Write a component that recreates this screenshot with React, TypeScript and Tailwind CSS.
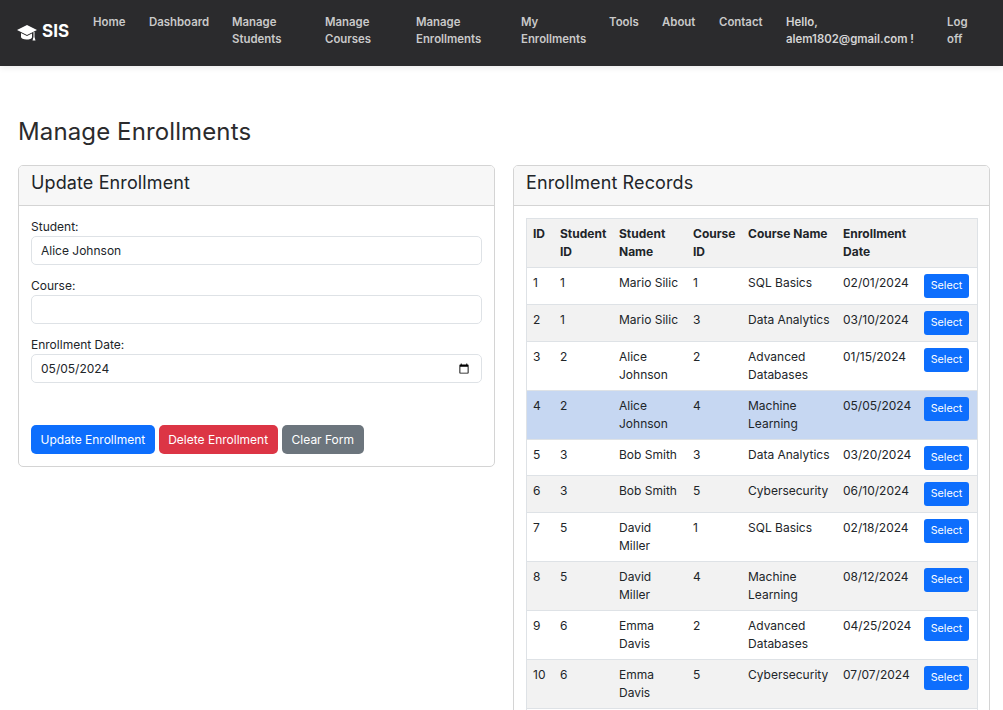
import React from "react";

const navItems = [
  { label: "Home", w: "w-[56px]" },
  { label: "Dashboard", w: "w-[83px]" },
  { label: "Manage Students", w: "w-[93px]" },
  { label: "Manage Courses", w: "w-[91px]" },
  { label: "Manage Enrollments", w: "w-[105px]" },
  { label: "My Enrollments", w: "w-[88px]" },
  { label: "Tools", w: "w-[53px]" },
  { label: "About", w: "w-[57px]" },
  { label: "Contact", w: "w-[67px]" },
];

const rows = [
  ["1", "1", "Mario Silic", "1", "SQL Basics", "02/01/2024"],
  ["2", "1", "Mario Silic", "3", "Data Analytics", "03/10/2024"],
  ["3", "2", "Alice Johnson", "2", "Advanced Databases", "01/15/2024"],
  ["4", "2", "Alice Johnson", "4", "Machine Learning", "05/05/2024"],
  ["5", "3", "Bob Smith", "3", "Data Analytics", "03/20/2024"],
  ["6", "3", "Bob Smith", "5", "Cybersecurity", "06/10/2024"],
  ["7", "5", "David Miller", "1", "SQL Basics", "02/18/2024"],
  ["8", "5", "David Miller", "4", "Machine Learning", "08/12/2024"],
  ["9", "6", "Emma Davis", "2", "Advanced Databases", "04/25/2024"],
  ["10", "6", "Emma Davis", "5", "Cybersecurity", "07/07/2024"],
];

const headers = ["ID", "Student ID", "Student Name", "Course ID", "Course Name", "Enrollment Date", ""];

const inputClass =
  "block w-full h-[29px] border border-[#dee2e6] rounded-[5px] px-[9px] text-[12px] leading-[18px] text-[#212529] bg-white outline-none [&::-webkit-datetime-edit-month-field]:p-0 [&::-webkit-datetime-edit-day-field]:p-0 [&::-webkit-datetime-edit-year-field]:p-0 [&::-webkit-datetime-edit-text]:p-0 [&::-webkit-datetime-edit]:p-0";

const Field = ({ label, value, type = "text", mb = "mb-[12px]" }: { label: string; value: string; type?: string; mb?: string }) => (
  <div className={mb}>
    <div className="h-[18px] text-[12px] leading-[18px] text-[#212529]">{label}</div>
    <input type={type} defaultValue={value} className={inputClass} />
  </div>
);

const App = () => {
  return (
    <div className="w-full h-[710px] overflow-hidden bg-white text-[#212529] font-['Inter',sans-serif]">
      <nav className="h-[66px] bg-[#2b2b2d] flex items-start pl-[17px] shadow-[0_2px_6px_rgba(0,0,0,0.08)]">
        <div className="flex items-center h-[20px] mt-[22px] mr-[12px] text-white font-bold text-[17px] w-[64px]">
          <svg viewBox="0 0 20 17" className="w-[20px] h-[17px] mr-[5px] shrink-0" fill="#fff">
            <path d="M10 1 20 6 10 11 0 6Z" />
            <path d="M4 9 10 12 15 9.500V13C15 15 12 15.500 9.500 15.500 6.500 15.500 4 14.500 4 13Z" />
            <path d="M16.500 8h1v5l1 3.500h-3l1-3.500Z" />
          </svg>
          <span>SIS</span>
        </div>
        {navItems.map((n) => (
          <div key={n.label} className={`${n.w} pt-[14px] text-[11.4px] leading-[17px] font-semibold text-[#c9c9c9]`}>
            <div className="pr-[8px]">{n.label}</div>
          </div>
        ))}
        <div className="w-[161px] pt-[14px] text-[11.4px] leading-[17px] font-semibold text-[#d4d4d4]">
          Hello,
          <br />
          alem1802@gmail.com !
        </div>
        <div className="pt-[14px] text-[11.4px] leading-[17px] font-semibold text-[#c9c9c9] w-[30px]">Log off</div>
      </nav>

      <main className="px-[18px] pt-[50px]">
        <h1 className="text-[24px] leading-[32px] font-normal tracking-[0.12px] text-[#2b2b2d] mb-[17px]">Manage Enrollments</h1>
        <div className="flex items-start gap-[18px] w-[972px]">
          <section className="w-[477px] border border-[#d4d4d4] rounded-[5px] overflow-hidden">
            <h2 className="h-[40px] bg-[#f7f7f7] border-b border-[#d4d4d4] px-[12px] text-[18px] leading-[34px] font-normal tracking-[0.12px]">Update Enrollment</h2>
            <div className="px-[12px] pt-[12px] pb-[12px]">
              <Field label="Student:" value="Alice Johnson" />
              <Field label="Course:" value="" />
              <Field label="Enrollment Date:" value="2024-05-05" type="date" mb="mb-[42px]" />
              <div className="flex gap-[4px]">
                <button className="h-[29px] px-[9.5px] rounded-[5px] bg-[#0d6efd] text-white text-[12px]">Update Enrollment</button>
                <button className="h-[29px] px-[9.5px] rounded-[5px] bg-[#dc3545] text-white text-[12px]">Delete Enrollment</button>
                <button className="h-[29px] px-[10px] rounded-[5px] bg-[#6c757d] text-white text-[12px]">Clear Form</button>
              </div>
            </div>
          </section>

          <section className="w-[477px] border border-[#d4d4d4] rounded-[5px] overflow-hidden">
            <h2 className="h-[40px] bg-[#f7f7f7] border-b border-[#d4d4d4] px-[12px] text-[18px] leading-[34px] font-normal tracking-[0.12px]">Enrollment Records</h2>
            <div className="p-[12px]">
              <table className="w-[451px] table-fixed border-collapse text-[12px] leading-[18px]">
                <colgroup>
                  <col className="w-[27.5px]" />
                  <col className="w-[59px]" />
                  <col className="w-[74px]" />
                  <col className="w-[55px]" />
                  <col className="w-[95px]" />
                  <col className="w-[81px]" />
                  <col className="w-[59.5px]" />
                </colgroup>
                <thead>
                  <tr className="bg-[#f2f2f2]">
                    {headers.map((h, i) => (
                      <th key={i} className="border border-[#dee2e6] border-x-0 first:border-l last:border-r px-[6px] pt-[6px] pb-[6.1px] text-left align-top font-bold">
                        {h}
                      </th>
                    ))}
                  </tr>
                </thead>
                <tbody>
                  {rows.map((r, idx) => {
                    const bg = idx === 3 ? "bg-[#c6d7f2]" : idx % 2 === 1 ? "bg-[#f2f2f2]" : "bg-white";
                    return (
                      <tr key={r[0]} className={bg}>
                        {r.map((c, i) => (
                          <td key={i} className="border-y border-[#dee2e6] first:border-l px-[6px] py-[6px] align-top">
                            {c}
                          </td>
                        ))}
                        <td className="border-y border-r border-[#dee2e6] px-[6px] py-[6px] align-top">
                          <button className="block h-[24px] mb-[-0.25px] w-[45px] rounded-[3px] bg-[#0d6efd] text-white text-[10.7px]">Select</button>
                        </td>
                      </tr>
                    );
                  })}
                  <tr>
                    <td colSpan={7} className="h-[37px] border-x border-y border-[#dee2e6]"></td>
                  </tr>
                </tbody>
              </table>
            </div>
          </section>
        </div>
      </main>
    </div>
  );
};

export default App;
